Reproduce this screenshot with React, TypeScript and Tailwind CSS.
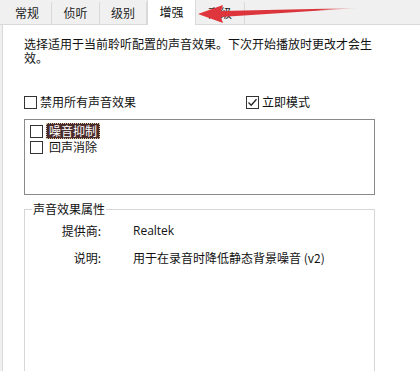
import React from "react";

const font = { fontFamily: '"Noto Sans CJK SC", "Noto Sans", sans-serif' };

function Box({ checked = false }: { checked?: boolean }) {
  return (
    <span className="w-[13px] h-[13px] border border-[#333333] bg-white flex items-center justify-center shrink-0">
      {checked && (
        <svg width="11" height="11" viewBox="0 0 11 11">
          <path d="M1.5 5.5 L4.2 8.2 L9.5 2.2" fill="none" stroke="#222" strokeWidth="1.3" />
        </svg>
      )}
    </span>
  );
}

export default function App() {
  const tabs = ["常规", "侦听", "级别", "增强", "高级"];
  const widths = ["w-[49px]", "w-[48px]", "w-[47px]", "w-[49px]", "w-[49px]"];
  return (
    <div className="w-[420px] h-[371px] bg-white relative overflow-hidden flex flex-col text-[12px] text-[#111]" style={font}>
      {/* tab strip */}
      <div className="h-[25px] bg-[#f0f0f0] border-b border-[#d9d9d9] flex pl-[3px] shrink-0">
        {tabs.map((t, i) =>
          i === 3 ? (
            <div key={t} className={`${widths[i]} h-[25px] -mb-px bg-white border-x border-[#d9d9d9] flex items-center justify-center pb-[1px]`}>
              {t}
            </div>
          ) : (
            <div key={t} className={`${widths[i]} mt-[2px] border-r border-[#d9d9d9] flex items-center justify-center text-[#222]`}>
              {t}
            </div>
          )
        )}
      </div>
      {/* body */}
      <div className="flex flex-1">
        <div className="w-[3px] bg-[#f0f0f0] border-r border-[#dadada] shrink-0" />
        <div className="flex-1 pl-[21px] pr-[45px] pt-[12px] flex flex-col">
          <p className="leading-[14px] text-[12px]">
            选择适用于当前聆听配置的声音效果。下次开始播放时更改才会生效。
          </p>
          <div className="flex items-center mt-[30px] h-[14px]">
            <div className="flex items-center gap-[3px] w-[222px]">
              <Box />
              <span>禁用所有声音效果</span>
            </div>
            <div className="flex items-center gap-[3px]">
              <Box checked />
              <span>立即模式</span>
            </div>
          </div>
          <div className="mt-[10px] h-[76px] border border-[#8a8a8a] pl-[5px] pt-[3px] flex flex-col">
            <div className="flex items-center h-[16px] gap-[3px]">
              <Box />
              <span className="bg-[#4a2b2b] text-white px-[3px] h-[16px] leading-[15px] outline outline-1 outline-dotted outline-[#d9c9a0] -outline-offset-1">噪音抑制</span>
            </div>
            <div className="flex items-center h-[16px] gap-[6px]">
              <Box />
              <span>回声消除</span>
            </div>
          </div>
          <div className="mt-[14px] flex-1 border-x border-t border-[#d6d6d6] relative pt-[13px]">
            <span className="absolute -top-[8px] left-[7px] bg-white px-[1px] leading-[14px]">声音效果属性</span>
            <div className="flex items-center h-[16px]">
              <span className="w-[92px] text-right pr-[16px]">提供商:</span>
              <span className="pl-[16px]" style={{ fontFamily: '"Open Sans", "Noto Sans", sans-serif' }}>Realtek</span>
            </div>
            <div className="flex items-center h-[16px] mt-[11px]">
              <span className="w-[92px] text-right pr-[16px]">说明:</span>
              <span className="pl-[16px]">用于在录音时降低静态背景噪音 (v2)</span>
            </div>
          </div>
        </div>
      </div>
      {/* red arrow annotation */}
      <svg className="absolute left-0 top-0" width="420" height="30" viewBox="0 0 420 30">
        <defs>
          <linearGradient id="g" x1="0" x2="1" y1="0" y2="0">
            <stop offset="0" stopColor="#e0353c" />
            <stop offset="0.75" stopColor="#d8343b" />
            <stop offset="1" stopColor="#e88a8d" stopOpacity="0.2" />
          </linearGradient>
        </defs>
        <polygon points="198,14 223,5 221,11 358,8 221,17 223,23" fill="url(#g)" />
      </svg>
    </div>
  );
}
